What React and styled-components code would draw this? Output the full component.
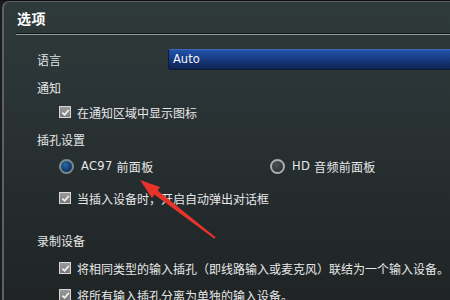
import React from 'react';
import styled, { createGlobalStyle } from 'styled-components';

const GlobalStyle = createGlobalStyle`
	html, body {
		margin: 0;
		padding: 0;
		background: #1a1c1d;
	}
	body {
		width: 450px;
		height: 300px;
		overflow: hidden;
		font-family: 'Noto Sans CJK SC', sans-serif;
	}
`;

const Frame = styled.div`
	position: relative;
	width: 450px;
	height: 300px;
	overflow: hidden;
	background: #1a1c1d;
	display: flex;
	flex-direction: column;
`;

const TopStrip = styled.div`
	height: 3px;
	background: linear-gradient(#4c4f50, #3a3d3e);
	border-bottom: 1px solid #111;
`;

const Panel = styled.div`
	flex: 1;
	margin-left: 2px;
	border-left: 2px solid #5c6262;
	border-top: 1px solid #5a6060;
	border-top-left-radius: 7px;
	background: linear-gradient(#2f3a3b 0%, #283032 45%, #1f2324 100%);
	display: flex;
	flex-direction: column;
`;

const Header = styled.div`
	height: 31px;
	padding-left: 13px;
	display: flex;
	align-items: center;
	color: #ffffff;
	font-weight: 700;
	font-size: 14px;
	letter-spacing: 0.5px;
`;

const Divider = styled.div`
	margin-left: 12px;
	height: 1px;
	background: #141818;
	border-bottom: 1px solid #8d9898;
`;

const Row = styled.div`
	height: 24px;
	margin-top: ${(p) => p.$mt}px;
	padding-left: ${(p) => (p.$item ? 55 : 33)}px;
	display: flex;
	align-items: center;
	color: #e6e8e8;
	font-size: 12px;
	white-space: nowrap;
`;

const LabelCell = styled.span`
	width: 131px;
	color: #dfe2e2;
`;

const Select = styled.div`
	flex: 1;
	height: 19px;
	margin-right: -6px;
	border: 1px solid #0b1a38;
	border-top-color: #3566b8;
	border-radius: 3px 0 0 3px;
	background: linear-gradient(#2353a8 0%, #1a418f 35%, #132f6a 70%, #0e2450 100%);
	color: #f4f6fa;
	font-family: 'DejaVu Sans', 'Noto Sans CJK SC', sans-serif;
	font-size: 11.5px;
	display: flex;
	align-items: center;
	padding-left: 4px;
`;

const Check = styled.span`
	width: 10px;
	height: 10px;
	margin-right: 6px;
	border: 1px solid #d6d6d6;
	background: linear-gradient(#9a9a9a, #7a7a7a);
	display: flex;
	align-items: center;
	justify-content: center;
	flex-shrink: 0;

	svg {
		width: 9px;
		height: 9px;
	}
`;

const Radio = styled.span`
	width: 11px;
	height: 11px;
	border-radius: 50%;
	border: 2px solid ${(p) => (p.$on ? '#7f8a8e' : '#a9b0b2')};
	background: ${(p) =>
		p.$on
			? 'radial-gradient(circle at 40% 35%, #2a6aa8, #0c3563 70%)'
			: 'radial-gradient(circle at 40% 35%, #4a5254, #2f3537 70%)'};
	margin-right: 7px;
	flex-shrink: 0;
`;

const RadioLabel = styled.span`
	width: ${(p) => p.$w || 'auto'};
	display: flex;
	align-items: center;
	font-family: 'DejaVu Sans', 'Noto Sans CJK SC', sans-serif;
	font-size: 11.5px;
	letter-spacing: 0.3px;

	b {
		font-family: 'Noto Sans CJK SC', sans-serif;
		font-weight: 400;
		font-size: 12px;
		margin-left: 4px;
	}
`;

const Arrow = styled.svg`
	position: absolute;
	left: 0;
	top: 0;
	pointer-events: none;
`;

function CheckBox() {
	return (
		<Check>
			<svg viewBox='0 0 10 10'>
				<path d='M1.5 5.2 L4 7.6 L8.6 2.2' fill='none' stroke='#f4f4f4' strokeWidth='1.8' />
			</svg>
		</Check>
	);
}

export default function App() {
	return (
		<>
			<GlobalStyle />
			<Frame>
				<TopStrip />
				<Panel>
					<Header>选项</Header>
					<Divider />

					<Row $mt={12}>
						<LabelCell>语言</LabelCell>
						<Select>Auto</Select>
					</Row>
					<Row $mt={4}>通知</Row>
					<Row $mt={1} $item>
						<CheckBox />
						在通知区域中显示图标
					</Row>

					<Row $mt={3}>插孔设置</Row>
					<Row $mt={3} $item>
						<RadioLabel $w='211px'>
							<Radio $on />
							AC97<b>前面板</b>
						</RadioLabel>
						<RadioLabel>
							<Radio />
							HD<b>音频前面板</b>
						</RadioLabel>
					</Row>
					<Row $mt={8} $item>
						<CheckBox />
						当插入设备时，开启自动弹出对话框
					</Row>

					<Row $mt={18}>录制设备</Row>
					<Row $mt={4} $item>
						<CheckBox />
						将相同类型的输入插孔（即线路输入或麦克风）联结为一个输入设备。
					</Row>
					<Row $mt={3} $item>
						<CheckBox />
						将所有输入插孔分离为单独的输入设备。
					</Row>
				</Panel>

				<Arrow width='450' height='300' viewBox='0 0 450 300'>
					<polygon
						points='140,180 160,187 157.6,190.4 215.6,237.2 214.4,238.8 154.4,194.4 152,198'
						fill='#e8332a'
					/>
				</Arrow>
			</Frame>
		</>
	);
}
